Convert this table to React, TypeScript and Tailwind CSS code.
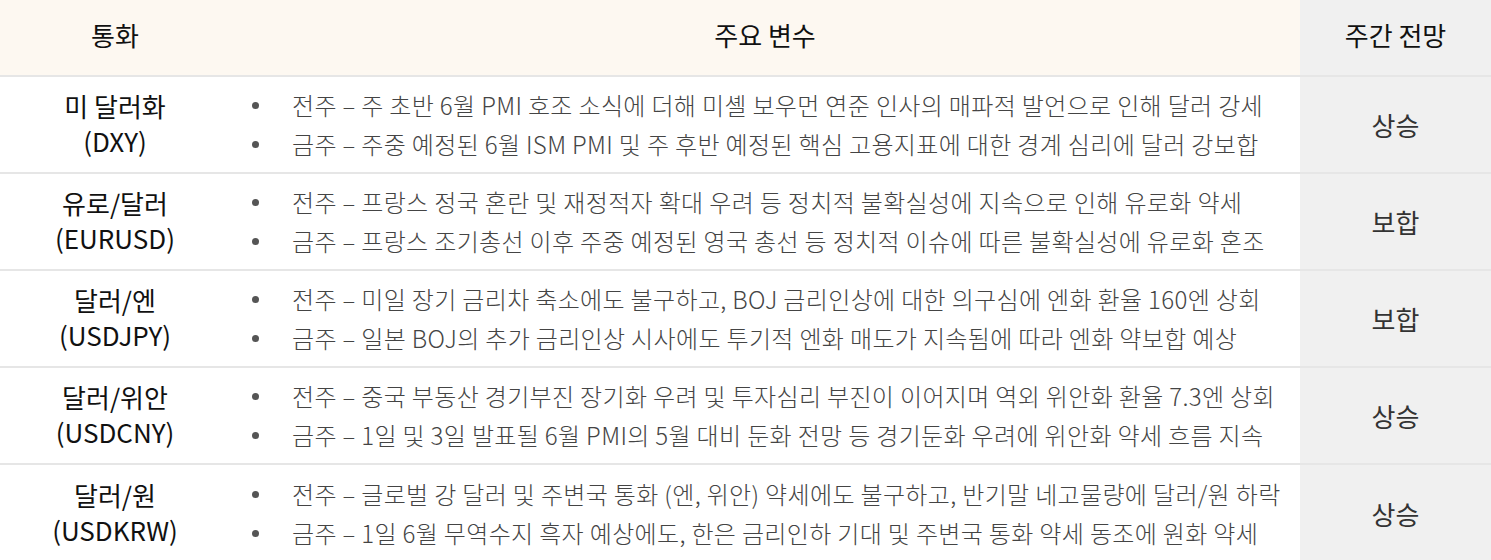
import React from 'react';

interface Row {
  name: string;
  code: string;
  prev: string;
  next: string;
  outlook: string;
}

const rows: Row[] = [
  {
    name: '미 달러화',
    code: '(DXY)',
    prev: '전주 – 주 초반 6월 PMI 호조 소식에 더해 미셸 보우먼 연준 인사의 매파적 발언으로 인해 달러 강세',
    next: '금주 – 주중 예정된 6월 ISM PMI 및 주 후반 예정된 핵심 고용지표에 대한 경계 심리에 달러 강보합',
    outlook: '상승',
  },
  {
    name: '유로/달러',
    code: '(EURUSD)',
    prev: '전주 – 프랑스 정국 혼란 및 재정적자 확대 우려 등 정치적 불확실성에 지속으로 인해 유로화 약세',
    next: '금주 – 프랑스 조기총선 이후 주중 예정된 영국 총선 등 정치적 이슈에 따른 불확실성에 유로화 혼조',
    outlook: '보합',
  },
  {
    name: '달러/엔',
    code: '(USDJPY)',
    prev: '전주 – 미일 장기 금리차 축소에도 불구하고, BOJ 금리인상에 대한 의구심에 엔화 환율 160엔 상회',
    next: '금주 – 일본 BOJ의 추가 금리인상 시사에도 투기적 엔화 매도가 지속됨에 따라 엔화 약보합 예상',
    outlook: '보합',
  },
  {
    name: '달러/위안',
    code: '(USDCNY)',
    prev: '전주 – 중국 부동산 경기부진 장기화 우려 및 투자심리 부진이 이어지며 역외 위안화 환율 7.3엔 상회',
    next: '금주 – 1일 및 3일 발표될 6월 PMI의 5월 대비 둔화 전망 등 경기둔화 우려에 위안화 약세 흐름 지속',
    outlook: '상승',
  },
  {
    name: '달러/원',
    code: '(USDKRW)',
    prev: '전주 – 글로벌 강 달러 및 주변국 통화 (엔, 위안) 약세에도 불구하고, 반기말 네고물량에 달러/원 하락',
    next: '금주 – 1일 6월 무역수지 흑자 예상에도, 한은 금리인하 기대 및 주변국 통화 약세 동조에 원화 약세',
    outlook: '상승',
  },
];

function Bullet({ text }: { text: string }) {
  return (
    <li className="flex items-center h-[39px]">
      <span className="w-[62px] shrink-0 pl-[22px]">
        <span className="block h-[7px] w-[7px] rounded-full bg-[#555]" />
      </span>
      <span className="whitespace-nowrap tracking-[0.35px]">{text}</span>
    </li>
  );
}

export default function App() {
  return (
    <div
      className="w-[1491px] h-[560px] bg-white overflow-hidden"
      style={{ fontFamily: '"Noto Sans CJK KR", "Noto Sans", sans-serif' }}
    >
      {/* header */}
      <div className="grid grid-cols-[230px_1070px_191px] h-[77px] border-b-2 border-[#e6e6e6] text-[26px] text-[#111]">
        <div className="flex items-center justify-center pb-[6px] bg-[#fdf8f1]">통화</div>
        <div className="flex items-center justify-center pb-[6px] bg-[#fdf8f1]">주요 변수</div>
        <div className="flex items-center justify-center pb-[6px] bg-[#f0f0f0]">주간 전망</div>
      </div>
      {rows.map((r, i) => (
        <div
          key={r.code}
          className={`grid grid-cols-[230px_1070px_191px] h-[97px] ${i < rows.length - 1 ? 'border-b-2 border-[#e6e6e6]' : ''}`}
        >
          <div className="flex flex-col items-center justify-center pb-[3px] text-[26px] leading-[35px] text-[#111]">
            <span>{r.name}</span>
            <span>{r.code}</span>
          </div>
          <ul className="flex flex-col justify-center text-[24px] font-light text-[#444]">
            <Bullet text={r.prev} />
            <Bullet text={r.next} />
          </ul>
          <div className="flex items-center justify-center bg-[#f0f0f0] text-[26px] text-[#333]">
            {r.outlook}
          </div>
        </div>
      ))}
    </div>
  );
}
